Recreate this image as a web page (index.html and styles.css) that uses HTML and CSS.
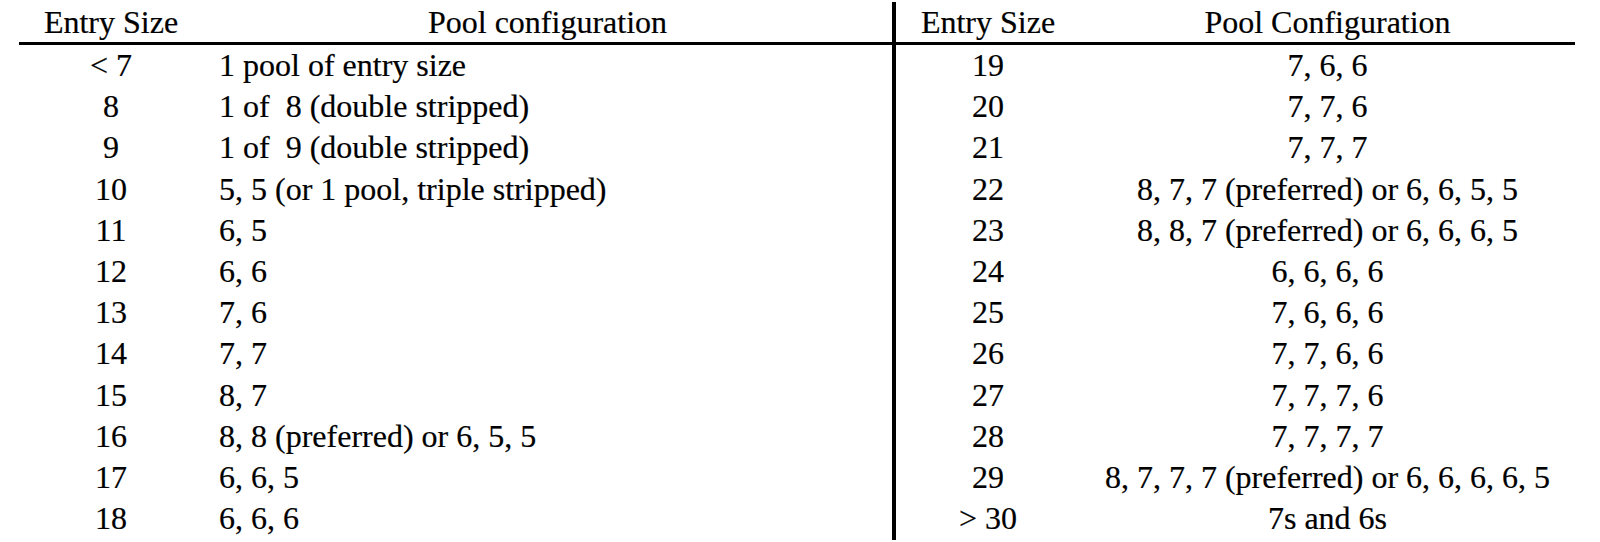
FILE: index.html
```html
<!DOCTYPE html>
<html lang="en">
<head>
<meta charset="utf-8">
<title>Pool configuration</title>
<link rel="stylesheet" href="styles.css">
</head>
<body>
<table class="pools">
  <colgroup>
    <col class="c-size">
    <col class="c-conf-l">
    <col class="c-size-r">
    <col class="c-conf-r">
  </colgroup>
  <thead>
    <tr>
      <th class="size">Entry Size</th>
      <th class="conf">Pool configuration</th>
      <th class="size split">Entry Size</th>
      <th class="conf">Pool Configuration</th>
    </tr>
  </thead>
  <tbody>
    <tr><td class="size">&lt; 7</td><td class="left">1 pool of entry size</td><td class="size split">19</td><td class="mid">7, 6, 6</td></tr>
    <tr><td class="size">8</td><td class="left">1 of&nbsp; 8 (double stripped)</td><td class="size split">20</td><td class="mid">7, 7, 6</td></tr>
    <tr><td class="size">9</td><td class="left">1 of&nbsp; 9 (double stripped)</td><td class="size split">21</td><td class="mid">7, 7, 7</td></tr>
    <tr><td class="size">10</td><td class="left">5, 5 (or 1 pool, triple stripped)</td><td class="size split">22</td><td class="mid">8, 7, 7 (preferred) or 6, 6, 5, 5</td></tr>
    <tr><td class="size">11</td><td class="left">6, 5</td><td class="size split">23</td><td class="mid">8, 8, 7 (preferred) or 6, 6, 6, 5</td></tr>
    <tr><td class="size">12</td><td class="left">6, 6</td><td class="size split">24</td><td class="mid">6, 6, 6, 6</td></tr>
    <tr><td class="size">13</td><td class="left">7, 6</td><td class="size split">25</td><td class="mid">7, 6, 6, 6</td></tr>
    <tr><td class="size">14</td><td class="left">7, 7</td><td class="size split">26</td><td class="mid">7, 7, 6, 6</td></tr>
    <tr><td class="size">15</td><td class="left">8, 7</td><td class="size split">27</td><td class="mid">7, 7, 7, 6</td></tr>
    <tr><td class="size">16</td><td class="left">8, 8 (preferred) or 6, 5, 5</td><td class="size split">28</td><td class="mid">7, 7, 7, 7</td></tr>
    <tr><td class="size">17</td><td class="left">6, 6, 5</td><td class="size split">29</td><td class="mid">8, 7, 7, 7 (preferred) or 6, 6, 6, 6, 5</td></tr>
    <tr class="last"><td class="size">18</td><td class="left">6, 6, 6</td><td class="size split">&gt; 30</td><td class="mid">7s and 6s</td></tr>
  </tbody>
</table>
</body>
</html>
```

FILE: styles.css
```css
html, body {
  margin: 0;
  padding: 0;
  background: #ffffff;
}

body,
.pools,
.pools th,
.pools td {
  font-family: "Liberation Serif", "Times New Roman", serif;
  font-size: 32px;
  color: #000000;
}

.pools {
  margin: 2px 0 0 19px;
  width: 1556px;
  table-layout: fixed;
  border-collapse: separate;
  border-spacing: 0;
}

.c-size { width: 184px; }
.c-conf-l { width: 689px; }
.c-size-r { width: 188px; }
.c-conf-r { width: 495px; }

.pools th,
.pools td {
  padding: 0;
  font-weight: normal;
  white-space: nowrap;
  line-height: 41.2px;
  height: 41.2px;
  vertical-align: top;
  -webkit-text-stroke: 0.2px #000;
}

.pools thead th {
  line-height: 40px;
  height: 40px;
  border-bottom: 3px solid #000;
  text-align: center;
}

.size { text-align: center; }
.left { text-align: left; padding-left: 16px !important; }
.mid { text-align: center; }

.split {
  border-left: 4px solid #000;
}

.pools tr.last td {
  padding-bottom: 1px;
}
```
